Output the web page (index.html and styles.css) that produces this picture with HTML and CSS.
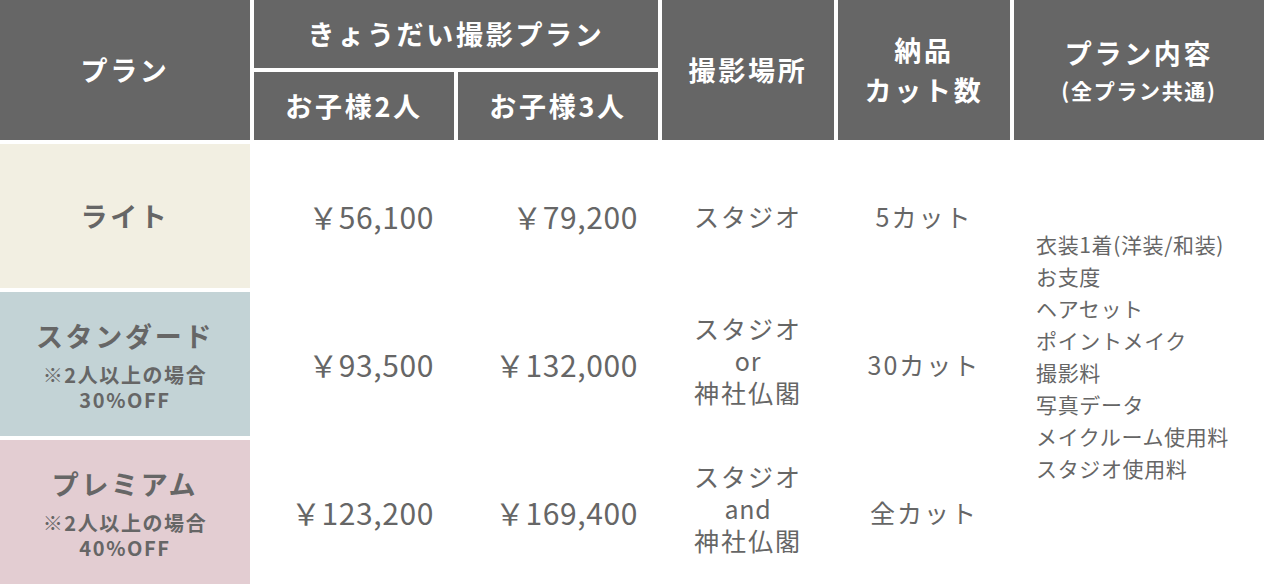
FILE: index.html
```html
<!DOCTYPE html>
<html lang="ja">
<head>
<meta charset="utf-8">
<title>きょうだい撮影プラン</title>
<link rel="stylesheet" href="styles.css">
</head>
<body>
<div class="plan-table">
  <div class="cell head head-plan">プラン</div>
  <div class="cell head head-group">きょうだい撮影プラン</div>
  <div class="cell head head-place">撮影場所</div>
  <div class="cell head head-cuts"><span class="head-lines">納品<br>カット数</span></div>
  <div class="cell head head-content"><span class="head-lines">プラン内容</span><span class="head-sub">(全プラン共通)</span></div>
  <div class="cell head head-kids">お子様2人</div>
  <div class="cell head head-kids">お子様3人</div>

  <div class="cell name name-lite"><span class="name-title">ライト</span></div>
  <div class="cell price">￥56,100</div>
  <div class="cell price">￥79,200</div>
  <div class="cell body"><span>スタジオ</span></div>
  <div class="cell body"><span>5カット</span></div>
  <div class="cell content">
    <ul class="content-list">
      <li>衣装1着(洋装/和装)</li>
      <li>お支度</li>
      <li>ヘアセット</li>
      <li>ポイントメイク</li>
      <li>撮影料</li>
      <li>写真データ</li>
      <li>メイクルーム使用料</li>
      <li>スタジオ使用料</li>
    </ul>
  </div>

  <div class="cell name name-standard"><span class="name-title">スタンダード</span><span class="name-note">※2人以上の場合<br>30%OFF</span></div>
  <div class="cell price">￥93,500</div>
  <div class="cell price">￥132,000</div>
  <div class="cell body multi"><span>スタジオ<br><span class="latin">or</span><br>神社仏閣</span></div>
  <div class="cell body"><span>30カット</span></div>

  <div class="cell name name-premium"><span class="name-title">プレミアム</span><span class="name-note">※2人以上の場合<br>40%OFF</span></div>
  <div class="cell price">￥123,200</div>
  <div class="cell price">￥169,400</div>
  <div class="cell body multi"><span>スタジオ<br><span class="latin">and</span><br>神社仏閣</span></div>
  <div class="cell body"><span>全カット</span></div>
</div>
</body>
</html>
```

FILE: styles.css
```css
html, body {
  margin: 0;
  padding: 0;
  background: #ffffff;
}

body {
  font-family: "Noto Sans CJK JP", "Noto Sans", sans-serif;
  color: #666666;
}

.plan-table {
  display: grid;
  grid-template-columns: 250px 200px 200px 172px 172px 250px;
  grid-template-rows: 68px 68px 144px 144px 144px;
  gap: 4px;
  width: 1264px;
  height: 584px;
  overflow: hidden;
}

.cell {
  display: flex;
  flex-direction: column;
  align-items: center;
  justify-content: center;
  text-align: center;
}

.head {
  background: #666666;
  color: #ffffff;
  font-weight: 700;
  font-size: 27px;
  letter-spacing: 0.1em;
  line-height: 40px;
}

.head-plan { grid-column: 1; grid-row: 1 / 3; }
.head-group { grid-column: 2 / 4; grid-row: 1; }
.head-place { grid-column: 4; grid-row: 1 / 3; }
.head-cuts { grid-column: 5; grid-row: 1 / 3; }
.head-content { grid-column: 6; grid-row: 1 / 3; }

.head-sub {
  font-size: 21px;
  line-height: 34px;
  letter-spacing: 0.08em;
}

.name {
  font-weight: 700;
}

.name-title {
  font-size: 27px;
  line-height: 40px;
  letter-spacing: 0.1em;
}

.name-note {
  margin-top: 6px;
  font-size: 20px;
  line-height: 25px;
  letter-spacing: 0.08em;
}

.name-lite { background: #f2efe2; }
.name-standard { background: #c3d3d6; }
.name-premium { background: #e3cdd2; }

.price {
  align-items: flex-end;
  padding-right: 20px;
  font-size: 30px;
  letter-spacing: 0.02em;
}

.body {
  font-size: 25px;
  line-height: 32px;
  letter-spacing: 0.08em;
}

.multi {
  padding-bottom: 8px;
}

.latin {
  letter-spacing: 0.03em;
}

.content {
  grid-column: 6;
  grid-row: 3 / 6;
  align-items: flex-start;
  padding-left: 22px;
  padding-bottom: 16px;
}

.content-list {
  list-style: none;
  margin: 0;
  padding: 0;
  text-align: left;
  font-size: 21px;
  line-height: 32px;
  letter-spacing: 0.03em;
}
```
